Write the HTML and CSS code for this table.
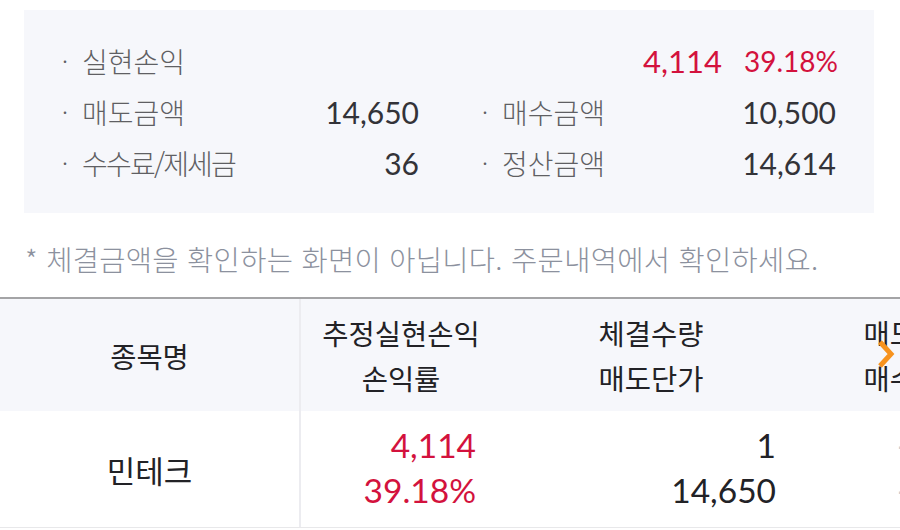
FILE: index.html
```html
<!DOCTYPE html>
<html lang="ko">
<head>
<meta charset="utf-8">
<link rel="stylesheet" href="styles.css">
</head>
<body>
<div class="summary">
  <div class="cell">
    <span class="label"><span class="dot">·</span>실현손익</span>
  </div>
  <div class="cell end">
    <span class="num red">4,114</span>
    <span class="pct red">39.18%</span>
  </div>
  <div class="cell">
    <span class="label"><span class="dot">·</span>매도금액</span>
    <span class="num">14,650</span>
  </div>
  <div class="cell">
    <span class="label"><span class="dot">·</span>매수금액</span>
    <span class="num">10,500</span>
  </div>
  <div class="cell">
    <span class="label tight"><span class="dot">·</span>수수료/제세금</span>
    <span class="num">36</span>
  </div>
  <div class="cell">
    <span class="label"><span class="dot">·</span>정산금액</span>
    <span class="num">14,614</span>
  </div>
</div>

<p class="note">* 체결금액을 확인하는 화면이 아닙니다. 주문내역에서 확인하세요.</p>

<div class="table">
  <div class="row head">
    <div class="col c1">종목명</div>
    <div class="col c2">추정실현손익<br>손익률</div>
    <div class="col c3">체결수량<br>매도단가</div>
    <div class="col c4">매도금액<br>매수금액</div>
  </div>
  <div class="row body">
    <div class="col c1 name">민테크</div>
    <div class="col c2 val red">4,114<br>39.18%</div>
    <div class="col c3 val">1<br>14,650</div>
    <div class="col c4 val faint">-<br>-</div>
  </div>
  <svg class="chev" width="18" height="28" viewBox="0 0 18 28"><path d="M3 2 L14 14 L3 26" fill="none" stroke="#f7931e" stroke-width="5" stroke-linejoin="miter"/></svg>
</div>
</body>
</html>
```

FILE: styles.css
```css
html, body {
  margin: 0;
  padding: 0;
  background: #ffffff;
}
body {
  width: 900px;
  height: 530px;
  overflow: hidden;
  font-family: "Lato", "Noto Sans CJK KR", sans-serif;
}
.summary {
  margin: 10px 26px 0 24px;
  background: #f6f7fb;
  padding: 25px 38px 25px 36px;
  display: grid;
  grid-template-columns: 359px 356px;
  column-gap: 61px;
  grid-auto-rows: 51px;
}
.cell {
  display: flex;
  align-items: center;
  justify-content: space-between;
}
.cell.end {
  justify-content: flex-end;
  gap: 22px;
}
.label {
  font-family: "Noto Sans CJK KR", sans-serif;
  font-size: 28px;
  font-weight: 300;
  color: #5f5f63;
  display: flex;
  align-items: center;
}
.label.tight {
  letter-spacing: -1.8px;
}
.dot {
  width: 22px;
  padding-left: 2px;
  box-sizing: border-box;
  font-size: 24px;
  color: #5f5f63;
  letter-spacing: 0;
}
.num {
  font-family: "Lato", sans-serif;
  font-size: 30px;
  color: #333338;
}
.cell.end .num {
  font-size: 31px;
}
.pct {
  font-family: "Lato", sans-serif;
  font-size: 28px;
  margin-right: -2px;
}
.red {
  color: #d3123d !important;
}
.note {
  margin: 26px 0 0 25px;
  line-height: 40px;
  font-family: "Noto Sans CJK KR", sans-serif;
  font-size: 28.5px;
  font-weight: 300;
  color: #8c919e;
  letter-spacing: 0.3px;
  white-space: nowrap;
}
.table {
  position: relative;
  margin-top: 18px;
  border-top: 2px solid #a4a4a6;
  border-bottom: 1px solid #e8e8ea;
  overflow: hidden;
  width: 900px;
}
.row {
  display: grid;
  grid-template-columns: 301px 200px 300px 230px;
}
.row.head {
  height: 112px;
  background: #f6f7fb;
}
.row.body {
  height: 116px;
  background: #ffffff;
}
.col {
  display: flex;
  flex-direction: column;
  justify-content: center;
  line-height: 45px;
  white-space: nowrap;
}
.head .col {
  font-family: "Noto Sans CJK KR", sans-serif;
  font-size: 28.5px;
  color: #222226;
  text-align: center;
  align-items: center;
}
.c1 {
  border-right: 2px solid #ececf0;
}
.name {
  font-family: "Noto Sans CJK KR", sans-serif;
  font-size: 31px;
  color: #222226;
  text-align: center;
  align-items: center;
}
.val {
  display: block;
  padding-top: 12px;
  font-family: "Lato", sans-serif;
  font-size: 33.5px;
  color: #222226;
  text-align: right;
  padding-right: 25px;
}
.faint {
  text-align: left;
  padding-left: 96px;
  color: #c8c8cc;
}
.chev {
  position: absolute;
  left: 877px;
  top: 41px;
}
```
